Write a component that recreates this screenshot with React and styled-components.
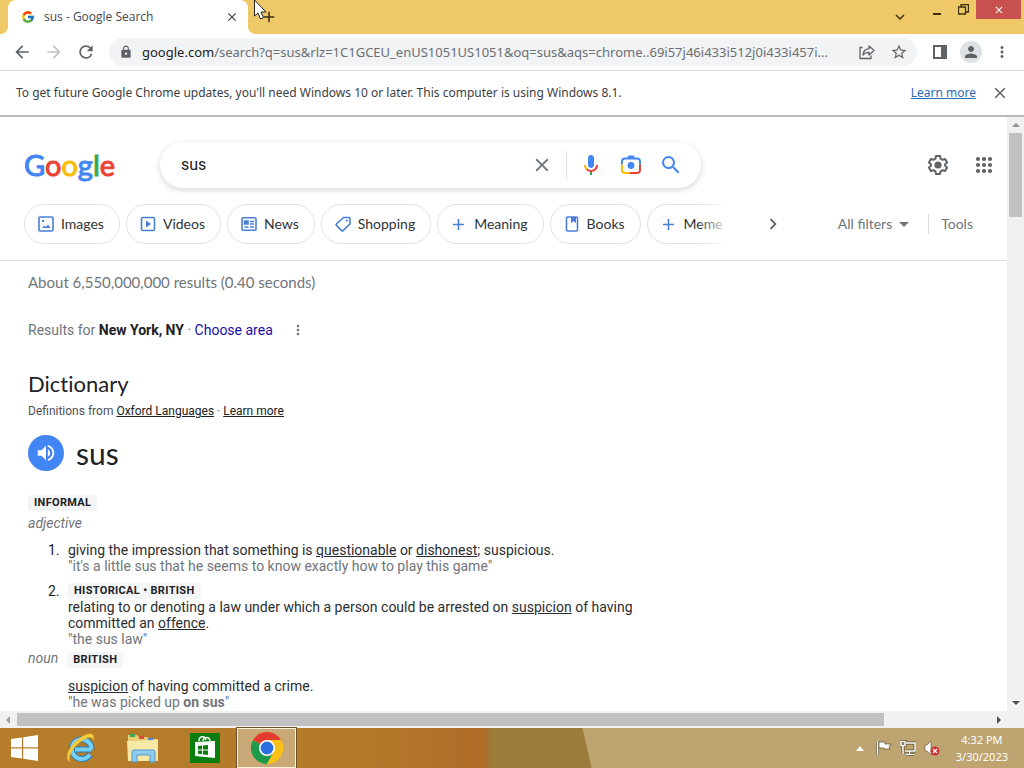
import React from "react";
import styled, { createGlobalStyle, css } from "styled-components";
import {
  MdArrowBack, MdArrowForward, MdRefresh, MdLock, MdStarBorder, MdPerson,
  MdMoreVert, MdClose, MdAdd, MdSearch, MdChevronRight,
  MdArrowDropDown, MdVolumeUp, MdKeyboardArrowDown,
} from "react-icons/md";
import { FcGoogle } from "react-icons/fc";

const ui = `"Noto Sans", "Open Sans", sans-serif`;
const product = `Lato, Inter, sans-serif`;
const body = `Roboto, "Liberation Sans", sans-serif`;

const Global = createGlobalStyle`
  *, *::before, *::after { box-sizing: border-box; }
  body { margin: 0; overflow: hidden; background: #fff; color: #202124; font-family: ${body}; }
  button { padding: 0; border: 0; background: none; color: inherit; font: inherit; cursor: pointer; }
  svg { display: block; flex: none; }
  h1, h2, p, ol { margin: 0; padding: 0; font-weight: 400; }
`;

const Desktop = styled.div`
  display: flex;
  flex-direction: column;
  height: 100vh;
`;

/* ---------- Browser frame ---------- */

const TitleBar = styled.header`
  display: flex;
  height: 34px;
  padding: 0 3px 0 8px;
  background: #efc868;
  color: #40300a;
`;

const Tab = styled.div`
  position: relative;
  display: flex;
  align-items: center;
  width: 240px;
  padding: 0 9px 0 13px;
  border-radius: 8px 8px 0 0;
  background: #fff;
  color: #45474a;
  font: 12px/34px "Open Sans", ${ui};
  &::before, &::after {
    content: "";
    position: absolute;
    bottom: 0;
    width: 8px;
    height: 8px;
  }
  &::before { left: -8px; background: radial-gradient(circle at 0 0, transparent 8px, #fff 8px); }
  &::after { right: -8px; background: radial-gradient(circle at 100% 0, transparent 8px, #fff 8px); }
`;

const TabTitle = styled.span`
  flex: 1;
  margin-left: 9px;
  white-space: nowrap;
`;

const IconButton = styled.button`
  display: inline-flex;
  align-items: center;
  justify-content: center;
  flex: none;
  width: ${(p) => p.$size || 24}px;
  height: ${(p) => p.$size || 24}px;
  color: ${(p) => p.$color || "#5f6368"};
`;

const NewTab = styled(IconButton)`
  align-self: center;
  margin-left: 9px;
`;

const WindowButtons = styled.div`
  display: flex;
  margin-left: auto;
`;

const WindowButton = styled.button`
  display: flex;
  align-items: center;
  justify-content: center;
  width: ${(p) => p.$width || 26}px;
  height: 19px;
  ${(p) => p.$danger && css`background: #c8504f; color: #fff;`}
`;

const TabSearch = styled(IconButton)`
  margin: 5px 12px 0 0;
`;

const Toolbar = styled.div`
  display: flex;
  align-items: center;
  height: 37px;
  padding: 0 10px;
  border-bottom: 1px solid #dadce0;
  gap: 8px;
`;

const Address = styled.div`
  display: flex;
  flex: 1;
  align-items: center;
  min-width: 0;
  height: 28px;
  margin: 0 3px;
  padding: 0 2px 0 10px;
  border-radius: 14px;
  background: #f1f3f4;
  font: 13px/28px ${ui};
`;

const Url = styled.span`
  flex: 1;
  min-width: 0;
  margin-left: 9px;
  overflow: hidden;
  color: #6b6f74;
  text-overflow: ellipsis;
  white-space: nowrap;
  b { color: #202124; font-weight: 400; }
`;

const Avatar = styled(IconButton)`
  border-radius: 50%;
  background: #dee1e6;
`;

const InfoBar = styled.div`
  display: flex;
  align-items: center;
  height: 46px;
  padding: 0 12px 0 16px;
  border-bottom: 2px solid #b9b9b9;
  font: 12px/18px ${ui};
  color: #3c4043;
  p { flex: 1; }
  a { margin-right: 12px; color: #2f6cb8; }
`;

/* ---------- Scrollable view ---------- */

const View = styled.div`
  display: grid;
  grid-template: minmax(0, 1fr) 17px / minmax(0, 1fr) 17px;
  flex: 1;
  min-height: 0;
  background: #f1f1f1;
`;

const Page = styled.main`
  overflow: hidden;
  background: #fff;
`;

const Track = styled.div`
  display: flex;
  flex-direction: ${(p) => (p.$vertical ? "column" : "row")};
  align-items: center;
  justify-content: space-between;
  background: #f1f1f1;
`;

const Arrow = styled.span`
  flex: none;
  margin: ${(p) => (p.$dir === "up" || p.$dir === "down" ? "6px 0" : "0 6px")};
  border: 4px solid transparent;
  ${(p) => p.$dir === "up" && css`border-top: 0; border-bottom-color: #909090;`}
  ${(p) => p.$dir === "down" && css`border-bottom: 0; border-top-color: #505050;`}
  ${(p) => p.$dir === "left" && css`border-left: 0; border-right-color: #a0a0a0;`}
  ${(p) => p.$dir === "right" && css`border-right: 0; border-left-color: #505050;`}
`;

const Rail = styled.div`
  flex: 1;
  align-self: stretch;
  padding: ${(p) => (p.$vertical ? "0 2px" : "2px 0 2px 1px")};
`;

const Thumb = styled.div`
  background: #c1c1c1;
  width: ${(p) => p.$width || "100%"};
  height: ${(p) => p.$height || "100%"};
`;

/* ---------- Search page ---------- */

const SearchRow = styled.div`
  display: flex;
  align-items: center;
  height: 46px;
  margin-top: 25px;
  padding: 0 11px 0 24px;
`;

const Logo = styled.a`
  width: 136px;
  font: 29px/46px ${product};
  text-decoration: none;
  white-space: nowrap;
`;

const Letter = styled.span`
  color: ${(p) => p.$color};
  -webkit-text-stroke: 1px ${(p) => p.$color};
`;

const SearchBox = styled.form`
  display: flex;
  flex: 0 1 541px;
  align-items: center;
  height: 46px;
  padding: 0 18px 0 21px;
  border-radius: 23px;
  background: #fff;
  box-shadow: 0 2px 5px 1px rgba(64, 60, 67, 0.16);
  gap: 12px;
`;

const SearchTools = styled.div`
  display: flex;
  gap: 16px;
`;

const Query = styled.input`
  flex: 1;
  min-width: 0;
  padding: 0;
  border: 0;
  outline: 0;
  background: none;
  color: #202124;
  font: 16px/24px ${body};
`;

const Divider = styled.span`
  flex: none;
  width: 1px;
  height: ${(p) => p.$height}px;
  background: #dadce0;
`;

const HeaderActions = styled.div`
  display: flex;
  margin-left: auto;
  gap: 22px;
`;

const FilterRow = styled.nav`
  display: flex;
  align-items: center;
  height: 73px;
  padding: 0 34px 0 24px;
  border-bottom: 1px solid #dadce0;
  font: 14px/20px ${product};
`;

const Pills = styled.div`
  position: relative;
  display: flex;
  flex: 0 1 706px;
  min-width: 0;
  gap: 6px;
  overflow: hidden;
  &::after {
    content: "";
    position: absolute;
    inset: 0 0 0 auto;
    width: 32px;
    background: linear-gradient(90deg, rgba(255, 255, 255, 0), #fff);
  }
`;

const Pill = styled.a`
  display: flex;
  flex: none;
  align-items: center;
  height: 40px;
  padding: 0 15px 0 12px;
  border: 1px solid #dfe1e5;
  border-radius: 20px;
  color: #2f3235;
  text-decoration: none;
  gap: 6px;
  svg { color: #4a7fd6; }
`;

const NextPills = styled(IconButton)`
  margin-left: 24px;
`;

const Filters = styled.div`
  display: flex;
  align-items: center;
  margin-left: auto;
  color: #70757a;
  gap: 12px;
  button { display: flex; align-items: center; }
`;

const Content = styled.div`
  width: 652px;
  max-width: 100%;
  padding-left: 28px;
`;

const Stats = styled.p`
  margin-top: 11px;
  color: #70757a;
  font: 15px/20px ${product};
`;

const Location = styled.p`
  display: flex;
  align-items: center;
  margin-top: 27px;
  color: #70757a;
  font-size: 14px;
  line-height: 22px;
  white-space: pre;
  b { color: #202124; }
  a { color: #1a0dab; text-decoration: none; }
  button { margin-left: 17px; width: 16px; height: 22px; }
`;

const Heading = styled.h1`
  margin-top: 29px;
  font: 22px/28px ${product};
  font-variant-ligatures: none;
`;

const Source = styled.p`
  margin-top: 5px;
  font-size: 12px;
  line-height: 16px;
  color: #4d5156;
  a { color: #202124; }
`;

const WordRow = styled.div`
  display: flex;
  align-items: center;
  height: 36px;
  margin: 16px 0 24px;
  gap: 12px;
`;

const Speak = styled(IconButton)`
  border-radius: 50%;
  background: #4285f4;
`;

const Word = styled.h2`
  font: 30px/34px ${product};
`;

const Tag = styled.span`
  display: inline-block;
  padding: 0 6px;
  border-radius: 2px;
  background: #f4f5f6;
  color: #202124;
  font-size: 11px;
  font-weight: 700;
  line-height: 16px;
  letter-spacing: 0.03em;
  vertical-align: top;
`;

const TagLine = styled.div`
  height: 16px;
`;

const PartOfSpeech = styled.div`
  display: flex;
  align-items: baseline;
  margin-top: ${(p) => p.$top}px;
  color: #70757a;
  font-size: 14px;
  line-height: 18px;
  gap: 9px;
`;

const Senses = styled.ol`
  display: flex;
  flex-direction: column;
  margin: 10px 0 2px;
  font-size: 14px;
  line-height: 16px;
  gap: 9px;
`;

const Sense = styled.li`
  display: grid;
  grid-template-columns: 20px 1fr;
  padding-left: 20px;
  list-style: none;
`;

const Definition = styled.p`
  color: #2b2d31;
  a { color: inherit; }
`;

const Example = styled.p`
  color: #70757a;
`;

/* ---------- Taskbar ---------- */

const Taskbar = styled.footer`
  display: flex;
  align-items: center;
  height: 40px;
  background:
    linear-gradient(77deg, transparent 576px, #bda470 577px),
    linear-gradient(90deg, #b57c2b 0, #b47b2a 360px, #b06b28 484px, #9b7c3a 492px, #a07e40 100%);
`;

const TaskButton = styled.button`
  display: flex;
  align-items: center;
  justify-content: center;
  width: ${(p) => p.$width || 62}px;
  height: 40px;
  ${(p) => p.$active && css`
    margin-left: 1px;
    border: 1px solid #fff2d8;
    outline: 1px solid #6d5126;
    background: #c9a877;
  `}
`;

const Tray = styled.div`
  display: flex;
  align-items: center;
  margin-left: auto;
  padding-right: 16px;
  color: #fff;
  gap: 8px;
`;

const TrayArrow = styled.button`
  margin-right: 4px;
`;

const Clock = styled.time`
  margin-left: 8px;
  font: 11px/17px ${ui};
  text-align: center;
`;

const Cursor = styled.svg`
  position: fixed;
  top: 0;
  left: 253px;
`;

/* ---------- Drawings ---------- */

const Outline = ({ children, size = 18 }) => (
  <svg width={size} height={size} viewBox="0 0 18 18" fill="none" stroke="currentColor" strokeWidth="1.6">
    {children}
  </svg>
);

const icons = {
  image: (
    <Outline>
      <rect x="2" y="2" width="14" height="14" rx="1" />
      <path d="M5 13l2.300-2.500 1.700 1.500 2-2.500 2.500 3.500z" fill="currentColor" stroke="none" />
      <circle cx="6" cy="6" r="1.200" fill="currentColor" stroke="none" />
    </Outline>
  ),
  video: (
    <Outline>
      <rect x="2.500" y="2.500" width="13" height="13" rx="1" />
      <path d="M7 5.500v7l5-3.500z" fill="currentColor" stroke="none" />
    </Outline>
  ),
  news: (
    <Outline>
      <rect x="2" y="2.800" width="14" height="12.400" rx="1" />
      <path d="M4.500 6h3.500v3H4.500z" fill="currentColor" />
      <path d="M10 6.500h4M10 9h4M4.500 12h4M10 12h4" />
    </Outline>
  ),
  shopping: (
    <Outline>
      <path d="M9.500 2.500H15a1 1 0 0 1 1 1V9l-7 6.600a1 1 0 0 1-1.400 0L2.400 10.400a1 1 0 0 1 0-1.400z" strokeLinejoin="round" />
      <circle cx="12.800" cy="5.600" r="1.100" fill="currentColor" stroke="none" />
    </Outline>
  ),
  plus: (
    <Outline>
      <path d="M8.500 4v11M3 9.500h11" />
    </Outline>
  ),
  book: (
    <Outline>
      <rect x="3.500" y="2" width="11" height="14" rx="1" />
      <path d="M8 2h5v6l-2.500-1.800L8 8z" fill="currentColor" stroke="none" />
    </Outline>
  ),
};

const Share = () => (
  <svg width="18" height="18" viewBox="0 0 18 18" fill="none" stroke="currentColor" strokeWidth="1.300" strokeLinejoin="round">
    <path d="M4.500 4.500H2v11h11v-3" />
    <path d="M5 12c.3-4 2.500-6 6-6.300V3l5 4.600-5 4.400V9.300C8.300 9.200 6.500 10 5 12z" />
  </svg>
);

const SidePanel = () => (
  <svg width="16" height="16" viewBox="0 0 16 16">
    <path d="M1 1h14v14H1zM3 3v10h6V3z" fill="currentColor" fillRule="evenodd" />
  </svg>
);

const Mic = () => (
  <svg width="24" height="24" viewBox="0 0 24 24">
    <path fill="#4285f4" d="M12 15c1.660 0 3-1.310 3-2.970V5.010C15 3.350 13.660 2 12 2S9 3.340 9 5.010v7.020C9 13.690 10.340 15 12 15z" />
    <path fill="#34a853" d="M11 18.080h2V22h-2z" />
    <path fill="#fbbc05" d="M7.050 16.870C5.780 15.540 5 14.040 5 12h2c0 1.450.56 2.420 1.470 3.380v.32l-1.150 1.180z" />
    <path fill="#ea4335" d="M12 16.930a4.970 5.250 0 0 1-3.540-1.550l-1.410 1.490C8.310 18.210 10.070 19 12 19c3.870 0 6.990-2.920 6.990-7H17c0 2.920-2.240 4.930-5 4.930z" />
  </svg>
);

const Lens = () => (
  <svg width="24" height="24" viewBox="0 0 24 24" fill="none" strokeWidth="2">
    <path d="M3 11.500V8.500A3 3 0 0 1 6 5.500h12a3 3 0 0 1 3 3v3" stroke="#4285f4" />
    <path d="M8 5l1.500-2.500h5L16 5z" fill="#4285f4" />
    <path d="M3 11.500v5.500a3 3 0 0 0 3 3h6" stroke="#fbbc05" />
    <path d="M21 11.500V17a3 3 0 0 1-3 3h-7" stroke="#ea4335" />
    <circle cx="12" cy="12.500" r="3.400" fill="#4285f4" />
  </svg>
);

const Gear = () => (
  <svg width="24" height="24" viewBox="0 0 24 24" fill="none" stroke="currentColor" strokeWidth="2" strokeLinejoin="round">
    <path d="M10 3h4l.6 2.700 1.900 1.100 2.600-.8 2 3.400-2 1.900v1.400l2 1.900-2 3.400-2.600-.8-1.900 1.100L14 21h-4l-.6-2.700-1.900-1.100-2.600.8-2-3.400 2-1.900v-1.400l-2-1.900 2-3.400 2.600.8 1.900-1.100z" />
    <circle cx="12" cy="12" r="3.600" fill="currentColor" stroke="none" />
  </svg>
);

const AppsGrid = () => (
  <svg width="24" height="24" viewBox="0 0 24 24" fill="currentColor">
    {[6, 12, 18].map((y) => [6, 12, 18].map((x) => <circle key={`${x}-${y}`} cx={x} cy={y} r="2.100" />))}
  </svg>
);

const Windows = () => (
  <svg width="28" height="26" viewBox="0 0 28 26" fill="#fff">
    <path d="M0 4l11-1.600V12.300H0zM12.200 2.200L27 0v12.300H12.200zM0 13.500h11v10L0 22zM12.200 13.500H27V26l-14.800-2.300z" />
  </svg>
);

const Explorer = () => (
  <svg width="32" height="32" viewBox="0 0 32 32" fill="none">
    <path d="M26.500 17.500H10M26.500 17.500a9.800 9.800 0 1 0-1.600 5" stroke="#1f80c2" strokeWidth="6" />
    <path d="M26.500 17.500H10M26.500 17.500a9.800 9.800 0 1 0-1.600 5" stroke="#79d0f4" strokeWidth="4" />
    <path d="M5 30C-3 26 7 8 21 2.500c7-2.500 9 1 7 6 0-3.500-3-4-7-2C11 11 2 23 5 30z" fill="#f7cf3b" stroke="#d9a520" strokeWidth=".5" />
  </svg>
);

const Folder = () => (
  <svg width="32" height="30" viewBox="0 0 32 30">
    <path d="M1 2h9l2 2h8l2 2h9v21H1z" fill="#e8cf74" />
    <path d="M3 1h5v3H3z" fill="#3ba35a" />
    <path d="M12 3h5v3h-5z" fill="#d84e3c" />
    <path d="M21 5h5v2h-5z" fill="#4a87d4" />
    <path d="M0 8l31-1v21H1z" fill="#f6e8a6" />
    <path d="M5 29V19q0-2 2-2h19q2 0 2 2v10h-5v-7H10v7z" fill="#8ecbee" stroke="#5299ca" />
  </svg>
);

const Store = () => (
  <svg width="30" height="30" viewBox="0 0 30 30">
    <path d="M0 0h30v30H0z" fill="#0a7f10" />
    <path d="M5 9l20-1v17l-20-2z" fill="#fff" />
    <path d="M9 8c0-5 6-6 7-1M13 8c0-4 7-5 7 0" stroke="#fff" strokeWidth="1.500" fill="none" />
    <path d="M8 13l4-.4v3.900H8zM13 12.500l5-.5v4.500h-5zM8 17.500h4v3.700l-4-.4zM13 17.500h5V22l-5-.6z" fill="#0a7f10" />
  </svg>
);

const Chrome = () => (
  <svg width="32" height="32" viewBox="0 0 32 32">
    <circle cx="16" cy="16" r="16" fill="#fbc116" />
    <path d="M16 16L2.140 8A16 16 0 0 1 29.860 8z" fill="#e33b2e" />
    <path d="M2.140 8A16 16 0 0 0 16 32l6.930-12L16 16z" fill="#1e9a4c" />
    <path d="M16 8h13.860A16 16 0 0 1 16 32l6.930-12z" fill="#fbc116" />
    <circle cx="16" cy="16" r="8" fill="#fff" />
    <circle cx="16" cy="16" r="6.400" fill="#2d6fe0" />
  </svg>
);

const Flag = () => (
  <svg width="16" height="16" viewBox="0 0 16 16">
    <path d="M1.500 1v14.500" stroke="#5c4a2b" strokeWidth="3" />
    <path d="M1.500 1v14.500" stroke="#fff" strokeWidth="1.600" />
    <path d="M3 2h6v2h6l-2 3 1 2H8V8H3z" fill="#fff" stroke="#5c4a2b" strokeWidth=".7" />
  </svg>
);

const Network = () => (
  <svg width="16" height="16" viewBox="0 0 16 16" fill="none">
    {[["#5c4a2b", 3], ["#fff", 1.5]].map(([stroke, width]) => (
      <path key={stroke} stroke={stroke} strokeWidth={width} d="M6 3h9v8H5M9.500 11v3M6 14.500h8M1 1.500h4v4H1zM3 5.500V14" />
    ))}
  </svg>
);

const Muted = () => (
  <svg width="16" height="16" viewBox="0 0 16 16">
    <path d="M1 5h2l4-4v14l-4-4H1z" fill="#fff" stroke="#5c4a2b" strokeWidth=".6" />
    <circle cx="11" cy="11" r="4.500" fill="#d3302f" />
    <path d="M9 9l4 4M13 9l-4 4" stroke="#fff" strokeWidth="1.300" />
  </svg>
);

/* ---------- App ---------- */

const letters = [
  ["G", "#4285f4"], ["o", "#ea4335"], ["o", "#fbbc05"],
  ["g", "#4285f4"], ["l", "#34a853"], ["e", "#ea4335"],
];

const pills = [
  ["image", "Images"], ["video", "Videos"], ["news", "News"], ["shopping", "Shopping"],
  ["plus", "Meaning"], ["book", "Books"], ["plus", "Meme"],
];

export default function App() {
  return (
    <Desktop>
      <Global />
      <TitleBar>
        <Tab>
          <FcGoogle size={14} />
          <TabTitle>sus - Google Search</TabTitle>
          <IconButton $size={14} $color="#3c4043" aria-label="Close tab"><MdClose size={14} /></IconButton>
        </Tab>
        <NewTab $color="#3a2c10" aria-label="New tab"><MdAdd size={18} /></NewTab>
        <WindowButtons>
          <TabSearch $color="#40300a" aria-label="Search tabs"><MdKeyboardArrowDown size={18} /></TabSearch>
          <WindowButton aria-label="Minimize">
            <svg width="8" height="10"><path d="M0 8h8v2H0z" fill="currentColor" /></svg>
          </WindowButton>
          <WindowButton aria-label="Restore">
            <svg width="11" height="11" fill="none" stroke="currentColor"><path d="M.5 3h7v7h-7zM3 3V.5h7.500V8H8" strokeWidth="1.300" /></svg>
          </WindowButton>
          <WindowButton $width={45} $danger aria-label="Close"><MdClose size={12} /></WindowButton>
        </WindowButtons>
      </TitleBar>

      <Toolbar>
        <IconButton aria-label="Back"><MdArrowBack size={20} /></IconButton>
        <IconButton $color="#bdc1c6" aria-label="Forward"><MdArrowForward size={20} /></IconButton>
        <IconButton aria-label="Reload"><MdRefresh size={20} /></IconButton>
        <Address>
          <MdLock size={14} color="#5f6368" />
          <Url><b>google.com</b>/search?q=sus&amp;rlz=1C1GCEU_enUS1051US1051&amp;oq=sus&amp;aqs=chrome..69i57j46i433i512j0i433i457i...</Url>
          <IconButton $size={32} aria-label="Share"><Share /></IconButton>
          <IconButton $size={32} aria-label="Bookmark"><MdStarBorder size={18} /></IconButton>
        </Address>
        <IconButton aria-label="Side panel"><SidePanel /></IconButton>
        <Avatar $size={22} aria-label="Profile"><MdPerson size={18} /></Avatar>
        <IconButton aria-label="Menu"><MdMoreVert size={18} /></IconButton>
      </Toolbar>

      <InfoBar>
        <p>To get future Google Chrome updates, you'll need Windows 10 or later. This computer is using Windows 8.1.</p>
        <a href="#learn">Learn more</a>
        <IconButton aria-label="Dismiss"><MdClose size={18} /></IconButton>
      </InfoBar>

      <View>
        <Page>
          <SearchRow>
            <Logo href="#home" aria-label="Google">
              {letters.map(([c, color], i) => <Letter key={i} $color={color}>{c}</Letter>)}
            </Logo>
            <SearchBox>
              <Query aria-label="Search" defaultValue="sus" />
              <IconButton type="button" $color="#70757a" aria-label="Clear"><MdClose size={22} /></IconButton>
              <Divider $height={28} />
              <SearchTools>
                <IconButton type="button" aria-label="Search by voice"><Mic /></IconButton>
                <IconButton type="button" aria-label="Search by image"><Lens /></IconButton>
                <IconButton $color="#4285f4" aria-label="Search"><MdSearch size={24} /></IconButton>
              </SearchTools>
            </SearchBox>
            <HeaderActions>
              <IconButton aria-label="Settings"><Gear /></IconButton>
              <IconButton aria-label="Apps"><AppsGrid /></IconButton>
            </HeaderActions>
          </SearchRow>

          <FilterRow>
            <Pills>
              {pills.map(([icon, label]) => (
                <Pill key={label} href={`#${label}`}>{icons[icon]}{label}</Pill>
              ))}
            </Pills>
            <NextPills $size={38} aria-label="More filters"><MdChevronRight size={22} /></NextPills>
            <Filters>
              <button>All filters<MdArrowDropDown size={24} /></button>
              <Divider $height={20} />
              <button>Tools</button>
            </Filters>
          </FilterRow>

          <Content>
            <Stats>About 6,550,000,000 results (0.40 seconds)</Stats>
            <Location>
              Results for <b>New York, NY</b> · <a href="#area">Choose area</a>
              <button aria-label="Location options"><MdMoreVert size={16} /></button>
            </Location>

            <Heading>Dictionary</Heading>
            <Source>
              Definitions from <a href="#oxford">Oxford Languages</a> · <a href="#more">Learn more</a>
            </Source>
            <WordRow>
              <Speak $size={36} $color="#fff" aria-label="Pronounce"><MdVolumeUp size={22} /></Speak>
              <Word>sus</Word>
            </WordRow>

            <TagLine><Tag>INFORMAL</Tag></TagLine>
            <PartOfSpeech $top={3}><i>adjective</i></PartOfSpeech>
            <Senses>
              <Sense>
                <span>1.</span>
                <div>
                  <Definition>
                    giving the impression that something is <a href="#questionable">questionable</a> or <a href="#dishonest">dishonest</a>; suspicious.
                  </Definition>
                  <Example>"it's a little sus that he seems to know exactly how to play this game"</Example>
                </div>
              </Sense>
              <Sense>
                <span>2.</span>
                <div>
                  <TagLine><Tag>HISTORICAL • BRITISH</Tag></TagLine>
                  <Definition>
                    relating to or denoting a law under which a person could be arrested on <a href="#suspicion">suspicion</a> of having committed an <a href="#offence">offence</a>.
                  </Definition>
                  <Example>"the sus law"</Example>
                </div>
              </Sense>
            </Senses>
            <PartOfSpeech $top={0}><i>noun</i><Tag>BRITISH</Tag></PartOfSpeech>
            <Senses>
              <Sense>
                <span />
                <div>
                  <Definition><a href="#suspicion">suspicion</a> of having committed a crime.</Definition>
                  <Example>"he was picked up <b>on sus</b>"</Example>
                </div>
              </Sense>
            </Senses>
          </Content>
        </Page>
        <Track $vertical>
          <Arrow $dir="up" />
          <Rail $vertical><Thumb $width="13px" $height="15%" /></Rail>
          <Arrow $dir="down" />
        </Track>
        <Track>
          <Arrow $dir="left" />
          <Rail><Thumb $width="89%" /></Rail>
          <Arrow $dir="right" />
        </Track>
      </View>

      <Taskbar>
        <TaskButton $width={50} aria-label="Start"><Windows /></TaskButton>
        <TaskButton aria-label="Internet Explorer"><Explorer /></TaskButton>
        <TaskButton aria-label="File Explorer"><Folder /></TaskButton>
        <TaskButton aria-label="Store"><Store /></TaskButton>
        <TaskButton $active $width={59} aria-label="Google Chrome"><Chrome /></TaskButton>
        <Tray>
          <TrayArrow aria-label="Show hidden icons">
            <svg width="8" height="5"><path d="M0 5l4-5 4 5z" fill="#fff" /></svg>
          </TrayArrow>
          <Flag />
          <Network />
          <Muted />
          <Clock>4:32 PM<br />3/30/2023</Clock>
        </Tray>
      </Taskbar>

      <Cursor width="14" height="21" viewBox="0 0 14 21">
        <path d="M1.500 0v16l3.500-3 2.500 6 3-1.300L8 12h5z" fill="#fff" stroke="#222" />
      </Cursor>
    </Desktop>
  );
}
